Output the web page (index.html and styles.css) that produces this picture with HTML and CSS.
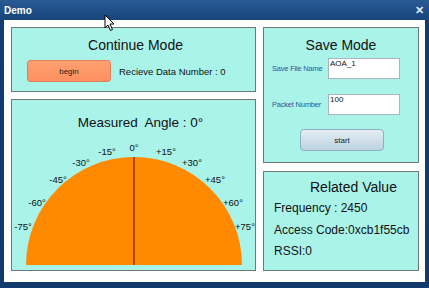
FILE: index.html
```html
<!DOCTYPE html>
<html lang="en">

<head>
    <meta charset="UTF-8">
    <title>Demo</title>
    <link rel="stylesheet" href="styles.css">
</head>

<body>
    <div class="window">
        <div class="titlebar">
            <span class="title">Demo</span>
            <span class="close">✕</span>
        </div>
        <div class="client">
            <div class="col-left">
                <div class="panel continue">
                    <h2>Continue Mode</h2>
                    <div class="continue-row">
                        <button class="btn-begin">begin</button>
                        <span class="recv">Recieve Data Number : 0</span>
                    </div>
                </div>
                <div class="panel measured">
                    <h2>Measured&nbsp; Angle : 0°</h2>
                    <svg class="gauge" width="243" height="132" viewBox="0 0 243 132">
                        <path d="M14 127 A108 108 0 0 1 230 127 Z" fill="#ff8a00" />
                        <line x1="122" y1="19" x2="122" y2="127" stroke="#a84c00" stroke-width="2" />
                        <g class="ticks" text-anchor="middle">
                            <text x="122" y="13">0°</text>
                            <text x="95" y="17">-15°</text>
                            <text x="154" y="17">+15°</text>
                            <text x="69" y="28">-30°</text>
                            <text x="180" y="28">+30°</text>
                            <text x="46" y="45">-45°</text>
                            <text x="203" y="45">+45°</text>
                            <text x="25" y="68">-60°</text>
                            <text x="221" y="68">+60°</text>
                            <text x="11" y="92">-75°</text>
                            <text x="233" y="92">+75°</text>
                        </g>
                    </svg>
                </div>
            </div>
            <div class="col-right">
                <div class="panel save">
                    <h2>Save Mode</h2>
                    <div class="field">
                        <label>Save File Name</label>
                        <div class="box">AOA_1</div>
                    </div>
                    <div class="field">
                        <label>Packet Number</label>
                        <div class="box">100</div>
                    </div>
                    <button class="btn-start">start</button>
                </div>
                <div class="panel related">
                    <h2>Related Value</h2>
                    <p>Frequency : 2450</p>
                    <p>Access Code:0xcb1f55cb</p>
                    <p>RSSI:0</p>
                </div>
            </div>
        </div>
        <svg class="cursor" width="12" height="18" viewBox="0 0 12 18">
            <path d="M1 1 L1 14 L4 11 L6.5 16.5 L8.5 15.5 L6 10 L10 10 Z" fill="#fff" stroke="#000" stroke-width="1" />
        </svg>
    </div>
</body>

</html>
```

FILE: styles.css
```css
body {
    margin: 0;
    padding: 0;
    font-family: "Liberation Sans", Arial, sans-serif;
    background: #0f3767;
    overflow: hidden;
}

.window {
    width: 429px;
    height: 288px;
    position: relative;
    background: linear-gradient(#1d4d88, #123d72 20px, #123a6c);
}

.titlebar {
    height: 20px;
    display: flex;
    align-items: center;
    justify-content: space-between;
    padding: 0 5px 0 4px;
    background: linear-gradient(#2a5a95, #174479);
    color: white;
}

.title {
    font-size: 10px;
    font-weight: bold;
}

.close {
    font-size: 11px;
    font-weight: bold;
    color: #dfe8f2;
}

.client {
    margin-left: 4px;
    width: 421px;
    height: 262px;
    box-sizing: border-box;
    padding: 7px 6px 11px 7px;
    background: white;
    display: flex;
    gap: 7px;
}

.col-left {
    width: 245px;
    display: flex;
    flex-direction: column;
    gap: 7px;
}

.col-right {
    width: 156px;
    display: flex;
    flex-direction: column;
    gap: 8px;
}

.panel {
    box-sizing: border-box;
    border: 1px solid #6f7a78;
    background: #a9f3e9;
}

.panel h2 {
    margin: 0;
    font-size: 14px;
    font-weight: normal;
    color: #111;
    text-align: center;
}

.continue {
    height: 65px;
}

.continue h2 {
    padding: 9px 0 0 4px;
    line-height: 16px;
}

.continue-row {
    display: flex;
    align-items: center;
    padding: 7px 0 0 15px;
}

.btn-begin {
    width: 84px;
    height: 22px;
    border: 1px solid #e0805a;
    border-radius: 3px;
    background: linear-gradient(#ffa070, #ff9060);
    font-family: inherit;
    font-size: 8px;
    color: #222;
    padding: 0;
}

.recv {
    margin-left: 8px;
    font-size: 9.5px;
    color: #111;
}

.measured {
    flex: 1;
}

.measured h2 {
    height: 38px;
    line-height: 46px;
    font-size: 13.5px;
    padding-left: 14px;
}

.gauge {
    display: block;
}

.ticks text {
    font-size: 9.5px;
    fill: #111;
}

.save {
    height: 136px;
    padding: 0 0 0 8px;
}

.save h2 {
    padding: 9px 8px 0 0;
    line-height: 16px;
    margin-bottom: 5px;
}

.field {
    display: flex;
    align-items: center;
    height: 21px;
    margin-bottom: 15px;
}

.field label {
    width: 56px;
    font-size: 7.5px;
    letter-spacing: -0.2px;
    color: #34559a;
    white-space: nowrap;
}

.box {
    width: 69px;
    height: 19px;
    border: 1px solid #aab4c0;
    background: white;
    font-size: 8px;
    line-height: 10px;
    color: #111;
    padding-left: 1px;
}

.btn-start {
    display: block;
    margin: -1px 0 0 28px;
    width: 84px;
    height: 22px;
    border: 1px solid #8fb0c4;
    border-radius: 4px;
    background: linear-gradient(#e4eef4, #bcd2e0);
    font-family: inherit;
    font-size: 8px;
    color: #222;
    padding: 0;
}

.related {
    flex: 1;
    padding: 0 0 0 10px;
}

.related h2 {
    padding: 7px 0 0 36px;
    text-align: left;
    line-height: 16px;
    margin-bottom: 3px;
}

.related p {
    margin: 0;
    font-size: 12px;
    line-height: 21.5px;
    color: #111;
}

.cursor {
    position: absolute;
    left: 104px;
    top: 14px;
}
```
